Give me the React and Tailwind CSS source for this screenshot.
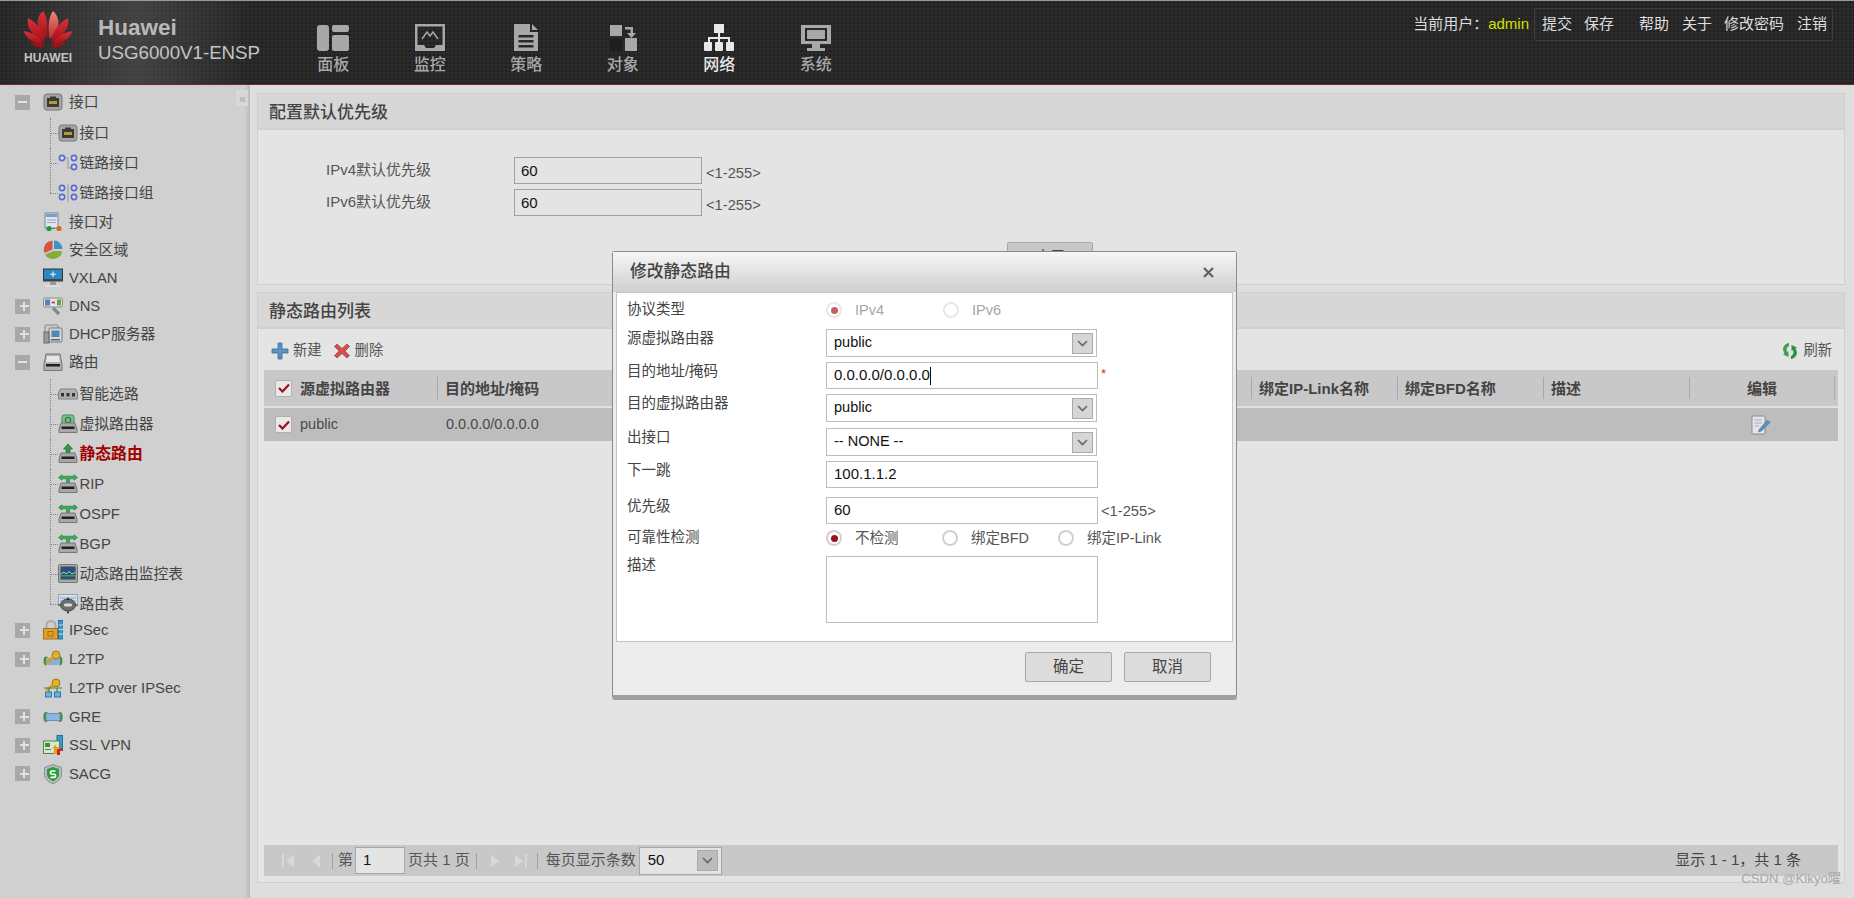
import React from "react";

// --- small drawn icons ---

const Svg = ({ w = 20, h = 20, vb = "0 0 20 20", children, className = "" }) => (
  <svg width={w} height={h} viewBox={vb} className={`shrink-0 ${className}`}>
    {children}
  </svg>
);

const PortIcon = () => (
  <Svg>
    <rect x="1" y="2" width="18" height="16" rx="3" fill="#a5a5a5" stroke="#777" />
    <rect x="4" y="6" width="12" height="9" fill="#3a3a3a" />
    <rect x="7" y="4.5" width="6" height="2" fill="#3a3a3a" />
    <rect x="6" y="9" width="8" height="3" fill="#b59a30" />
  </Svg>
);

const LinkIcon = ({ group }) => (
  <Svg>
    {group && <path d="M10 1V19" stroke="#999" />}
    {!group && <path d="M4 5H10V15H16" stroke="#aaa" strokeWidth="1.5" fill="none" />}
    <circle cx="4" cy="5" r="2.6" fill="#d8dcf0" stroke="#5a6cc8" strokeWidth="1.6" />
    <circle cx="16" cy="5" r="2.6" fill="#d8dcf0" stroke="#5a6cc8" strokeWidth="1.6" />
    <circle cx="16" cy="14" r="2.6" fill="#d8dcf0" stroke="#5a6cc8" strokeWidth="1.6" />
    {group && <circle cx="4" cy="14" r="2.6" fill="#d8dcf0" stroke="#5a6cc8" strokeWidth="1.6" />}
  </Svg>
);

const PairIcon = () => (
  <Svg>
    <rect x="2" y="1" width="13" height="15" fill="#dfe6f0" stroke="#6d86a8" />
    <rect x="3" y="2" width="11" height="3" fill="#7d9cc4" />
    <path d="M4 8H13M4 10.5H13" stroke="#a0a8b4" />
    <circle cx="6" cy="16.5" r="2.6" fill="#1f9a35" />
    <path d="M9 16.5H12" stroke="#777" />
    <circle cx="16" cy="16.5" r="2.6" fill="#dd6a10" />
  </Svg>
);

const PieIcon = () => (
  <Svg>
    <path d="M11 9L11 0.5A8.5 8.5 0 0 1 19.5 9Z" fill="#3f93c4" />
    <path d="M10 11L19 11A9 8 0 0 1 2 14.5Z" fill="#84ad3c" />
    <path d="M9.5 9.5L1.5 13A8.7 8.7 0 0 1 9.5 0.8Z" fill="#cf5546" />
  </Svg>
);

const VxlanIcon = () => (
  <Svg>
    <rect x="0.5" y="1" width="19" height="12" fill="#2a89c4" stroke="#333" />
    <path d="M10 3.5V9M7.2 6.2H12.8" stroke="#fff" />
    <rect x="0.5" y="11" width="19" height="2" fill="#444" />
    <rect x="7" y="14" width="6" height="3" fill="#9a9a9a" />
    <rect x="2" y="17" width="16" height="2" fill="#ddd" />
  </Svg>
);

const DnsIcon = () => (
  <Svg>
    <rect x="0.5" y="2" width="19" height="9" rx="1.5" fill="#dfe3ea" stroke="#888" />
    <rect x="2" y="3.5" width="5" height="6" fill="#5a7fb8" />
    <path d="M8.5 6.5H12" stroke="#c83030" strokeWidth="1.6" />
    <rect x="14" y="3.5" width="4" height="6" fill="#6aa04a" />
    <path d="M10 12L16 18" stroke="#888" strokeWidth="3.4" />
  </Svg>
);

const DhcpIcon = () => (
  <Svg>
    <rect x="2" y="1" width="13" height="13" rx="1" fill="#ccc" stroke="#888" />
    <rect x="6" y="4" width="13" height="14" rx="1" fill="#d8d8d8" stroke="#777" />
    <rect x="8.5" y="6.5" width="8" height="6.5" fill="#4f88b4" />
    <rect x="1" y="8" width="5" height="11" fill="#9a9a9a" stroke="#666" />
    <rect x="8" y="15" width="9" height="1.5" fill="#666" />
  </Svg>
);

const RouterBase = ({ children, dark = true }) => (
  <Svg>
    {children}
    <path d="M3 9H17L19 15V18.5H1V15Z" fill="#a8a8a8" stroke="#777" />
    {dark && <rect x="3.5" y="12.5" width="13" height="2.5" fill="#222" />}
  </Svg>
);

const RouteIcon = () => (
  <Svg>
    <path d="M3 2H17L19 12V18.5H1V12Z" fill="#b0b0b0" stroke="#777" />
    <path d="M4 4H16L17 10H3Z" fill="#e6e6e6" />
    <rect x="3" y="12" width="14" height="2.5" fill="#222" />
  </Svg>
);

const SmartIcon = () => (
  <Svg>
    <path d="M2.5 5H17.5L19.5 9V15H0.5V9Z" fill="#b0b0b0" stroke="#808080" />
    <rect x="3" y="9" width="3" height="3.5" fill="#333" />
    <rect x="8.5" y="9" width="3" height="3.5" fill="#333" />
    <rect x="14" y="9" width="3" height="3.5" fill="#333" />
  </Svg>
);

const VRouterIcon = () => (
  <RouterBase>
    <path d="M4 9V3Q4 1 6 1H14Q16 1 16 3V11H4Z" fill="#7fbf8c" stroke="#3f8a55" />
    <circle cx="10" cy="6" r="2.6" fill="none" stroke="#2e7d46" strokeWidth="1.4" />
  </RouterBase>
);

const StaticIcon = () => (
  <RouterBase>
    <path d="M10 0L14.5 5H12V13H8V5H5.5Z" fill="#2b9a4a" stroke="#14602a" strokeWidth="0.6" />
  </RouterBase>
);

const DynamicIcon = () => (
  <RouterBase>
    <path d="M0.5 3.5L4 0.8V2.2H16V0.8L19.5 3.5L16 6.2V4.8H11.5V12H8.5V4.8H4V6.2Z" fill="#38b05a" stroke="#14602a" strokeWidth="0.5" />
  </RouterBase>
);

const TableMonitorIcon = () => (
  <Svg>
    <rect x="0.5" y="0.5" width="19" height="18" rx="1.5" fill="#a8a8a8" stroke="#777" />
    <rect x="2.5" y="2.5" width="15" height="13" fill="#2f4f70" />
    <path d="M3 10L6 8L8 10L11 7.5L14 10L17 8.5" stroke="#9fd0f0" fill="none" />
    <rect x="2.5" y="11" width="15" height="1.5" fill="#3aa055" />
  </Svg>
);

const RouteTableIcon = () => (
  <Svg>
    <rect x="0.5" y="0.5" width="19" height="11" fill="#cfe2f2" stroke="#8aa8c4" />
    <path d="M2 4H18M2 7H18" stroke="#8aa8c4" />
    <ellipse cx="10" cy="11" rx="7.5" ry="6" fill="#6d6d6d" stroke="#444" />
    <rect x="6" y="9.5" width="8" height="3" rx="1.5" fill="#ddd" />
    <path d="M10 3L8.5 6H11.5ZM10 20L8.5 17.6H11.5Z" fill="#222" />
    <path d="M0 11H3M17 11H20" stroke="#444" />
  </Svg>
);

const LockIcon = () => (
  <Svg>
    <path d="M3.5 9V5.5A4.5 4.5 0 0 1 12.5 5.5V9" fill="none" stroke="#aaa" strokeWidth="2" />
    <rect x="0.5" y="8.5" width="14" height="10.5" fill="#e0a030" stroke="#a87010" />
    <rect x="5" y="11.5" width="5" height="4.5" fill="none" stroke="#a87010" />
    <rect x="15.5" y="0.5" width="4.5" height="18.5" fill="#3d97c8" stroke="#2270a0" />
    <path d="M15.5 5H20M15.5 9.5H20M15.5 14H20" stroke="#bde" />
  </Svg>
);

const KeyTunnelIcon = () => (
  <Svg>
    <ellipse cx="3" cy="12" rx="2.4" ry="4.4" fill="#4a8a3c" />
    <ellipse cx="17" cy="12" rx="2.4" ry="4.4" fill="#4a8a3c" />
    <rect x="3" y="9" width="14" height="7" fill="#8ab0d8" />
    <circle cx="13" cy="6" r="4" fill="#e0b030" stroke="#a07a10" />
    <path d="M10 8.5L3 14" stroke="#d0a020" strokeWidth="3" />
  </Svg>
);

const KeyNetIcon = () => (
  <Svg>
    <circle cx="13" cy="5" r="4" fill="#e0b030" stroke="#a07a10" />
    <path d="M10 7.5L3 12" stroke="#d0a020" strokeWidth="3" />
    <path d="M1 10H19M6 10V14M14 10V14" stroke="#4a8a3c" strokeWidth="1.2" />
    <rect x="2.5" y="14" width="6" height="5" fill="#6db0de" stroke="#2b78ac" />
    <rect x="11.5" y="14" width="6" height="5" fill="#6db0de" stroke="#2b78ac" />
  </Svg>
);

const GreIcon = () => (
  <Svg>
    <ellipse cx="3" cy="10" rx="2.6" ry="5" fill="#4a8a3c" />
    <ellipse cx="17" cy="10" rx="2.6" ry="5" fill="#4a8a3c" />
    <rect x="3" y="6.5" width="14" height="7" fill="#8db6de" stroke="#6690b8" />
  </Svg>
);

const SslIcon = () => (
  <Svg>
    <rect x="14" y="0.5" width="5.5" height="13" fill="#3d97c8" stroke="#2270a0" />
    <rect x="0.5" y="6" width="16" height="12.5" fill="#d8e8d0" stroke="#4a8a3c" />
    <rect x="2" y="8" width="5" height="4" fill="#4a8a3c" />
    <path d="M2 14.5H8" stroke="#4a8a3c" />
    <path d="M12 9L13.5 12H17L14.5 14L15 19H10.5L11 14L9 12H11Z" fill="#e0a020" />
    <path d="M14 14L20 14V16H17V20H14Z" fill="#d82020" />
  </Svg>
);

const ShieldIcon = () => (
  <Svg>
    <path d="M10 0.5L18.5 3.5V10C18.5 15 14 18 10 19.8C6 18 1.5 15 1.5 10V3.5Z" fill="#b8bcbc" stroke="#8a8e8e" />
    <path d="M10 3L16 5V10C16 13.5 13 16 10 17.2C7 16 4 13.5 4 10V5Z" fill="#2f9a3c" />
    <path d="M12.5 7H9A1.6 1.6 0 0 0 9 10.2H11A1.6 1.6 0 0 1 11 13.4H7.5" fill="none" stroke="#fff" strokeWidth="1.6" />
  </Svg>
);

// --- sidebar ---

const ExpandBox = ({ type }) => (
  <span className="flex h-[15px] w-[15px] shrink-0 items-center justify-center bg-[#a8a8a8]">
    {type && <span className="relative block h-[2px] w-[9px] bg-[#e2e2e2]" />}
    {type === "plus" && <span className="-ml-[5.5px] block h-[9px] w-[2px] bg-[#e2e2e2]" />}
  </span>
);

const TopRow = ({ label, icon, expand, h = "h-[28px]" }) => (
  <div className={`flex items-center pl-[15px] text-[14.8px] text-[#454545] ${h}`}>
    {expand ? <ExpandBox type={expand} /> : <span className="w-[15px] shrink-0" />}
    <span className="ml-[13px] w-[26px] shrink-0">{icon}</span>
    <span>{label}</span>
  </div>
);

const ChildRow = ({ label, icon, active, last }) => (
  <div className="flex h-[30px] items-center pl-[50px] text-[14.8px] text-[#454545]">
    <span className="relative w-[8px] shrink-0 self-stretch">
      <span className={`absolute top-0 left-0 border-l border-dotted border-[#888] ${last ? "h-[15px]" : "bottom-0"}`} />
      <span className="absolute top-[15px] left-0 w-[8px] border-t border-dotted border-[#888]" />
    </span>
    <span className="w-[21.5px] shrink-0">{icon}</span>
    <span className={active ? "text-[15.8px] font-bold text-[#a00000]" : ""}>{label}</span>
  </div>
);

const Sidebar = () => (
  <aside className="relative flex w-[250px] shrink-0 flex-col bg-[#d0d0d0] pt-[3px] shadow-[inset_-4px_0_3px_-1px_#bdbdbd]">
    <div className="absolute top-[5px] right-[2px] flex h-[16px] w-[12px] items-center justify-center bg-[#d8d8d8] text-[13px] leading-none font-bold tracking-[-1px] text-[#b4b4b4]">
      «
    </div>
    <TopRow label="接口" icon={<PortIcon />} expand="minus" />
    <div className="pt-[2px]">
      <ChildRow label="接口" icon={<PortIcon />} />
      <ChildRow label="链路接口" icon={<LinkIcon />} />
      <ChildRow label="链路接口组" icon={<LinkIcon group />} last />
    </div>
    <TopRow label="接口对" icon={<PairIcon />} />
    <TopRow label="安全区域" icon={<PieIcon />} />
    <TopRow label="VXLAN" icon={<VxlanIcon />} />
    <TopRow label="DNS" icon={<DnsIcon />} expand="plus" />
    <TopRow label="DHCP服务器" icon={<DhcpIcon />} expand="plus" />
    <TopRow label="路由" icon={<RouteIcon />} expand="minus" />
    <div className="-mb-[3px] pt-[3px]">
      <ChildRow label="智能选路" icon={<SmartIcon />} />
      <ChildRow label="虚拟路由器" icon={<VRouterIcon />} />
      <ChildRow label="静态路由" icon={<StaticIcon />} active />
      <ChildRow label="RIP" icon={<DynamicIcon />} />
      <ChildRow label="OSPF" icon={<DynamicIcon />} />
      <ChildRow label="BGP" icon={<DynamicIcon />} />
      <ChildRow label="动态路由监控表" icon={<TableMonitorIcon />} />
      <ChildRow label="路由表" icon={<RouteTableIcon />} last />
    </div>
    <TopRow label="IPSec" icon={<LockIcon />} expand="plus" h="h-[28.8px]" />
    <TopRow label="L2TP" icon={<KeyTunnelIcon />} expand="plus" h="h-[28.8px]" />
    <TopRow label="L2TP over IPSec" icon={<KeyNetIcon />} h="h-[28.8px]" />
    <TopRow label="GRE" icon={<GreIcon />} expand="plus" h="h-[28.6px]" />
    <TopRow label="SSL VPN" icon={<SslIcon />} expand="plus" h="h-[28.6px]" />
    <TopRow label="SACG" icon={<ShieldIcon />} expand="plus" h="h-[28.6px]" />
  </aside>
);

// --- header ---

const HuaweiLogo = () => (
  <svg width="50" height="37" viewBox="0 0 50 37" className="shrink-0">
    <defs>
      <linearGradient id="petal" x1="0" y1="0" x2="0" y2="1">
        <stop offset="0" stopColor="#d8333a" />
        <stop offset="1" stopColor="#a50e14" />
      </linearGradient>
      <linearGradient id="petalLight" x1="0" y1="0" x2="0" y2="1">
        <stop offset="0" stopColor="#e8877a" />
        <stop offset="1" stopColor="#c42a2a" />
      </linearGradient>
    </defs>
    <path d="M23.5 28C14 20 11 8 20 0C25 6 25 18 23.5 28Z" fill="url(#petal)" />
    <path d="M26.5 28C36 20 39 8 30 0C25 6 25 18 26.5 28Z" fill="url(#petalLight)" />
    <path d="M22 31C12 27 3 18 5 7C13 11 21 20 22 31Z" fill="url(#petal)" />
    <path d="M28 31C38 27 47 18 45 7C37 11 29 20 28 31Z" fill="url(#petal)" />
    <path d="M21 33.5C12 33 3 28 0.5 20C8 21 17 26 21 33.5Z" fill="url(#petal)" />
    <path d="M29 33.5C38 33 47 28 49.5 20C42 21 33 26 29 33.5Z" fill="url(#petal)" />
    <path d="M22 36.5C16 37 11 35 7 31.5C12 30.5 18 32 22 36.5Z" fill="#a50e14" />
    <path d="M28 36.5C34 37 39 35 43 31.5C38 30.5 32 32 28 36.5Z" fill="#a50e14" />
  </svg>
);

const navIcons = {
  panel: (
    <>
      <rect x="0" y="1" width="12" height="26" rx="3" />
      <rect x="15" y="1" width="17" height="7" rx="2" />
      <rect x="15" y="11" width="17" height="16" rx="2" />
    </>
  ),
  monitor: (
    <>
      <path fillRule="evenodd" d="M1 0H31V27H1ZM3.5 2.5V21H10L12 24H20L22 21H28.5V2.5Z" />
      <path d="M8 15L13 8L16 12L19 8L24 15" fill="none" stroke="currentColor" strokeWidth="1.5" />
    </>
  ),
  policy: (
    <path
      fillRule="evenodd"
      d="M4 0H20V8H28V27H4ZM22 0L28 6H22ZM8.5 11V13.5H23.5V11ZM8.5 16V18.5H23.5V16ZM8.5 21V23.5H23.5V21Z"
    />
  ),
  object: (
    <>
      <rect x="3" y="1" width="12" height="11" />
      <rect x="18" y="14" width="12" height="13" />
      <path d="M18 3H26V9H29L24.5 14L20 9H23.5V5.5H18Z" />
      <rect x="3" y="15" width="12" height="12" fill="#1f1f1f" />
    </>
  ),
  network: (
    <>
      <rect x="11" y="0" width="10" height="9" />
      <path d="M15 9H17V13H27V18H25V15H17V18H15V15H7V18H5V13H15Z" />
      <rect x="1" y="18" width="8" height="9" rx="1" />
      <rect x="12" y="18" width="8" height="9" rx="1" />
      <rect x="23" y="18" width="8" height="9" rx="1" />
    </>
  ),
  system: (
    <>
      <path fillRule="evenodd" d="M1 1H31V20H1ZM5 4V17H27V4Z" />
      <rect x="7" y="6" width="18" height="9" />
      <rect x="12" y="20" width="8" height="4" />
      <rect x="7" y="24" width="18" height="3" />
    </>
  ),
};

const NavItem = ({ label, icon, active }) => (
  <div className={`flex w-[96.5px] flex-col items-center pt-[23px] ${active ? "text-[#e8e8e8]" : "text-[#a8a8a8]"}`}>
    <svg width="32" height="27" viewBox="0 0 32 27" fill="currentColor">
      {navIcons[icon]}
    </svg>
    <span className="mt-[3px] text-[16px] leading-[22px] font-medium">{label}</span>
  </div>
);

const Header = () => (
  <header className="flex h-[85px] shrink-0 border-t border-b border-t-[#9a9a9a] border-b-[#6e2a2a] bg-[#2a2a2b] bg-[radial-gradient(circle,#1f1f20_1.1px,transparent_1.5px)] bg-[length:4px_4px]">
    <div className="flex w-[250px] shrink-0 bg-[linear-gradient(90deg,rgba(90,90,90,0)_0%,rgba(90,90,90,0.55)_55%,rgba(90,90,90,0)_100%)]">
      <div className="flex w-[98px] shrink-0 flex-col items-start pt-[10px] pl-[23px]">
        <HuaweiLogo />
        <span className="mt-[3px] w-[50px] text-center text-[12px] leading-[14px] font-bold text-[#c4c4c4]">HUAWEI</span>
      </div>
      <div className="pt-[14px] whitespace-nowrap">
        <div className="text-[22.5px] leading-[26px] font-bold text-[#b8b8b8]">Huawei</div>
        <div className="text-[18.7px] leading-[24px] text-[#c4c4c4]">USG6000V1-ENSP</div>
      </div>
    </div>
    <nav className="ml-[35px] flex">
      <NavItem label="面板" icon="panel" />
      <NavItem label="监控" icon="monitor" />
      <NavItem label="策略" icon="policy" />
      <NavItem label="对象" icon="object" />
      <NavItem label="网络" icon="network" active />
      <NavItem label="系统" icon="system" />
    </nav>
    <div className="mt-[7px] mr-[21px] ml-auto flex h-[33px] items-center text-[15px] whitespace-nowrap text-[#dedede]">
      <span>当前用户：</span>
      <span className="mr-[5px] text-[#d6e000]">admin</span>
      <div className="flex h-[33px] w-[299px] items-center rounded-[2px] border border-[#3e3e3f] pl-[7px]">
        <span>提交</span>
        <span className="ml-[12px]">保存</span>
        <span className="ml-[25px]">帮助</span>
        <span className="ml-[13px]">关于</span>
        <span className="ml-[12px]">修改密码</span>
        <span className="ml-[13px]">注销</span>
      </div>
    </div>
  </header>
);

// --- main panels ---

const PanelTitle = ({ children }) => (
  <div className="flex h-[36px] items-center border-b-2 border-b-[#d0d0d0] bg-[#d7d7d7] pt-[3px] pl-[11px] text-[17px] font-medium text-[#444]">
    {children}
  </div>
);

const BoxInput = ({ value }) => (
  <div className="flex h-[27px] w-[188px] items-center border border-[#a0a0a0] bg-[#e4e4e4] pt-[2px] pl-[6px] text-[15px] text-[#111]">
    {value}
  </div>
);

const PriorityRow = ({ label }) => (
  <div className="flex h-[32px] items-start text-[15px] text-[#555]">
    <span className="mt-[3px] w-[200px] shrink-0 pl-[12px] leading-[20px]">{label}</span>
    <BoxInput value="60" />
    <span className="mt-[5px] ml-[4px] text-[14.7px]">&lt;1-255&gt;</span>
  </div>
);

const Checkbox = () => (
  <span className="flex h-[17px] w-[17px] shrink-0 items-center justify-center rounded-[2px] border border-[#b0b0b0] bg-[#e8e8e8]">
    <svg width="12" height="10" viewBox="0 0 12 10">
      <path d="M1 5L4.5 8.5L11 1.5" fill="none" stroke="#a01020" strokeWidth="2.2" />
    </svg>
  </span>
);

const HeadCell = ({ width, children, center, first }) => (
  <div
    className={`flex h-[22px] shrink-0 items-center border-r border-[#a8a8a8] pt-[2px] text-[15px] font-bold text-[#444] ${center ? "justify-center" : first ? "" : "pl-[7px]"}`}
    style={{ width }}
  >
    {children}
  </div>
);

const PlusIcon = () => (
  <svg width="18" height="18" viewBox="0 0 18 18">
    <path d="M7 1H11V7H17V11H11V17H7V11H1V7H7Z" fill="#5b92c2" stroke="#39699a" strokeWidth="0.8" />
  </svg>
);

const CrossIcon = () => (
  <svg width="16" height="16" viewBox="0 0 16 16">
    <path d="M3 1L8 5.5L13 1L15.5 3.5L11 8L15.5 12.5L13 15L8 10.5L3 15L0.5 12.5L5 8L0.5 3.5Z" fill="#d05050" stroke="#a83838" strokeWidth="0.7" />
  </svg>
);

const RefreshIcon = () => (
  <svg width="16" height="18" viewBox="0 0 16 18">
    <path d="M7 1V4C5 5 4 7 5 10L6.5 9V15L1 12.5L2.5 11.5C-0.5 7 1.5 2 7 1Z" fill="#3f9f50" />
    <path d="M9 17V14C11 13 12 11 11 8L9.5 9V3L15 5.5L13.5 6.5C16.5 11 14.5 16 9 17Z" fill="#2f8f44" />
  </svg>
);

const EditIcon = () => (
  <svg width="20" height="20" viewBox="0 0 20 20">
    <rect x="1" y="1" width="13" height="18" rx="1" fill="#e6e6ea" stroke="#8a8a90" />
    <path d="M3.5 5H11M3.5 8H11M3.5 11H8" stroke="#a8a8b0" />
    <path d="M16.5 5L19 7.5L10.5 16L7.5 17L8.5 14Z" fill="#5b92c8" stroke="#3a6a9c" strokeWidth="0.6" />
  </svg>
);

const PagerTriangle = ({ dir, bar }) => (
  <svg width="16" height="16" viewBox="0 0 16 16" fill="#d8d8d8">
    {dir === "left" ? <path d="M13 1.5V14.5L5 8Z" /> : <path d="M3 1.5V14.5L11 8Z" />}
    {bar && <rect x={dir === "left" ? 1 : 13} y="1" width="2" height="14" />}
  </svg>
);

const PagerSep = () => <span className="block h-[16px] w-[1px] shrink-0 bg-[#a0a0a0]" />;

const Main = () => (
  <main className="flex min-w-0 flex-1 flex-col pt-[8px] pr-[9px] pl-[7px]">
    <section className="h-[192px] shrink-0 border border-[#cfcfcf] bg-[#e4e4e4]">
      <PanelTitle>配置默认优先级</PanelTitle>
      <div className="pt-[27px] pl-[56px]">
        <PriorityRow label="IPv4默认优先级" />
        <PriorityRow label="IPv6默认优先级" />
      </div>
      <div className="mt-[21px] ml-[749px] flex h-[30px] w-[86px] justify-center rounded-t-[2px] border border-[#a8a8a8] bg-[#c8c8c8] pt-[3px] text-[15px] text-[#444]">
        应用
      </div>
    </section>

    <section className="mt-[7px] flex h-[591px] shrink-0 flex-col border border-[#cfcfcf] bg-[#e4e4e4] px-[6px]">
      <div className="-mx-[6px]">
        <PanelTitle>静态路由列表</PanelTitle>
      </div>
      <div className="flex h-[41px] shrink-0 items-center pt-[2px] text-[14.3px] text-[#555]">
        <span className="ml-[7px]"><PlusIcon /></span>
        <span className="ml-[4px]">新建</span>
        <span className="ml-[12px]"><CrossIcon /></span>
        <span className="ml-[5px]">删除</span>
        <span className="ml-auto"><RefreshIcon /></span>
        <span className="mr-[6px] ml-[5px]">刷新</span>
      </div>
      <div className="flex h-[38px] shrink-0 items-center border-b-2 border-b-[#e0e0e0] bg-[#c8c8c8]">
        <span className="ml-[11px] w-[25px]"><Checkbox /></span>
        <HeadCell width="138px" first>源虚拟路由器</HeadCell>
        <HeadCell width="814px">目的地址/掩码</HeadCell>
        <HeadCell width="146px">绑定IP-Link名称</HeadCell>
        <HeadCell width="146px">绑定BFD名称</HeadCell>
        <HeadCell width="146px">描述</HeadCell>
        <HeadCell width="145px" center>编辑</HeadCell>
      </div>
      <div className="flex h-[33px] shrink-0 items-center bg-[#bdbdbe] text-[14.5px] text-[#4a4a4a]">
        <span className="ml-[11px] w-[25px]"><Checkbox /></span>
        <span className="w-[146px]">public</span>
        <span>0.0.0.0/0.0.0.0</span>
        <span className="mr-[67px] ml-auto"><EditIcon /></span>
      </div>
      <div className="mt-auto mb-[6px] flex h-[31px] shrink-0 items-center bg-[#c8c8c8] text-[15px] text-[#555]">
        <span className="ml-[17px]"><PagerTriangle dir="left" bar /></span>
        <span className="ml-[10px]"><PagerTriangle dir="left" /></span>
        <span className="ml-[9px]"><PagerSep /></span>
        <span className="ml-[5px]">第</span>
        <div className="ml-[2px] flex h-[27px] w-[50px] items-center border border-[#a8a8a8] bg-[#e4e4e4] pl-[7px] text-[#111]">1</div>
        <span className="ml-[3px]">页共 1 页</span>
        <span className="ml-[6px]"><PagerSep /></span>
        <span className="ml-[11px]"><PagerTriangle dir="right" /></span>
        <span className="ml-[8px]"><PagerTriangle dir="right" bar /></span>
        <span className="ml-[9px]"><PagerSep /></span>
        <span className="ml-[8px]">每页显示条数</span>
        <div className="ml-[3px] flex h-[28px] w-[83px] items-center border border-[#a8a8a8] bg-[#e4e4e4] pl-[8px] text-[#111]">
          50
          <span className="mr-[3px] ml-auto"><SelectArrow dim /></span>
        </div>
        <span className="mr-[37px] ml-auto text-[#444]">显示 1 - 1，共 1 条</span>
      </div>
    </section>
  </main>
);

// --- dialog ---

const SelectArrow = ({ dim }) => (
  <span className={`flex h-[21px] w-[21px] items-center justify-center border border-[#aaa] ${dim ? "bg-[#bcbcbc]" : "bg-[#d6d6d6]"}`}>
    <svg width="11" height="7" viewBox="0 0 11 7">
      <path d="M1 1L5.5 5.5L10 1" fill="none" stroke="#666" strokeWidth="1.6" />
    </svg>
  </span>
);

const Radio = ({ checked, muted }) => (
  <span className={`flex h-[16px] w-[16px] shrink-0 items-center justify-center rounded-full border-2 ${muted ? "border-[#e8e8e8]" : "border-[#d0d0d0]"} bg-white`}>
    {checked && <span className={`h-[7px] w-[7px] rounded-full ${muted ? "bg-[#c46060]" : "bg-[#9c0f1a]"}`} />}
  </span>
);

const DialogRow = ({ label, mt, children }) => (
  <div className={`flex items-start ${mt}`}>
    <span className="-mt-[1px] w-[209px] shrink-0 pl-[10px] text-[14.5px] leading-[20px] text-[#444]">{label}</span>
    {children}
  </div>
);

const SelectBox = ({ value }) => (
  <div className="flex h-[28px] w-[271px] items-center border border-[#bdbdbd] bg-white pl-[7px] text-[14.5px] text-[#111]">
    {value}
    <span className="mr-[3px] ml-auto"><SelectArrow /></span>
  </div>
);

const TextBox = ({ value, caret }) => (
  <div className="flex h-[27px] w-[272px] items-center border border-[#bdbdbd] bg-white pl-[7px] text-[15px] text-[#111]">
    {value}
    {caret && <span className="ml-[0.5px] h-[18px] w-[1px] bg-[#111]" />}
  </div>
);

const RadioLabel = ({ checked, muted, label, width }) => (
  <span className={`flex items-center ${width}`}>
    <Radio checked={checked} muted={muted} />
    <span className={`ml-[13px] text-[14.5px] leading-[20px] ${muted ? "text-[#a6a6a6]" : "text-[#555]"}`}>{label}</span>
  </span>
);

const DialogButton = ({ children }) => (
  <div className="flex h-[30px] w-[87px] items-center justify-center rounded-[2px] border border-[#a8a8a8] bg-[#dcdcdc] text-[15.5px] text-[#444]">
    {children}
  </div>
);

const Dialog = () => (
  <div className="absolute top-[251px] left-[612px] h-[449px] w-[625px] rounded-[3px] border border-b-[5px] border-[#8c8c8c] border-b-[#a0a0a0] bg-[#ececec]">
    <div className="flex h-[40px] items-center bg-[linear-gradient(#f6f6f6,#cfcfcf)] pr-[22px] pl-[17px]">
      <span className="text-[16.8px] font-medium text-[#444]">修改静态路由</span>
      <svg width="11" height="11" viewBox="0 0 11 11" className="ml-auto">
        <path d="M1 1L10 10M10 1L1 10" stroke="#666" strokeWidth="2.4" />
      </svg>
    </div>
    <div className="mx-[3px] h-[350px] border border-[#c4c4c4] bg-white pt-[7px]">
      <DialogRow label="协议类型">
        <div className="flex items-center">
          <RadioLabel checked muted label="IPv4" width="w-[117px]" />
          <RadioLabel muted label="IPv6" />
        </div>
      </DialogRow>
      <DialogRow label="源虚拟路由器" mt="mt-[9px]">
        <SelectBox value="public" />
      </DialogRow>
      <DialogRow label="目的地址/掩码" mt="mt-[5px]">
        <TextBox value="0.0.0.0/0.0.0.0" caret />
        <span className="ml-[3px] text-[13px] leading-[24px] text-[#e82020]">*</span>
      </DialogRow>
      <DialogRow label="目的虚拟路由器" mt="mt-[5px]">
        <SelectBox value="public" />
      </DialogRow>
      <DialogRow label="出接口" mt="mt-[6px]">
        <SelectBox value="-- NONE --" />
      </DialogRow>
      <DialogRow label="下一跳" mt="mt-[5px]">
        <TextBox value="100.1.1.2" />
      </DialogRow>
      <DialogRow label="优先级" mt="mt-[9px]">
        <TextBox value="60" />
        <span className="mt-[3px] ml-[3px] text-[14.7px] text-[#555]">&lt;1-255&gt;</span>
      </DialogRow>
      <DialogRow label="可靠性检测" mt="mt-[4px]">
        <div className="flex items-center">
          <RadioLabel checked label="不检测" width="w-[116px]" />
          <RadioLabel label="绑定BFD" width="w-[116px]" />
          <RadioLabel label="绑定IP-Link" />
        </div>
      </DialogRow>
      <DialogRow label="描述" mt="mt-[8px]">
        <div className="h-[67px] w-[272px] border border-[#bdbdbd] bg-white" />
      </DialogRow>
    </div>
    <div className="flex justify-end gap-[12px] pt-[10px] pr-[25px]">
      <DialogButton>确定</DialogButton>
      <DialogButton>取消</DialogButton>
    </div>
  </div>
);

export default function App() {
  return (
    <div className="relative flex h-[898px] w-[1854px] flex-col overflow-hidden bg-[#dedede] font-['Liberation_Sans','Noto_Sans_CJK_SC',sans-serif]">
      <Header />
      <div className="flex min-h-0 flex-1">
        <Sidebar />
        <Main />
      </div>
      <Dialog />
      <span className="absolute right-[13px] bottom-[9px] text-[13.2px] text-[#a8a8a8]">CSDN @Kikyo曜</span>
    </div>
  );
}
